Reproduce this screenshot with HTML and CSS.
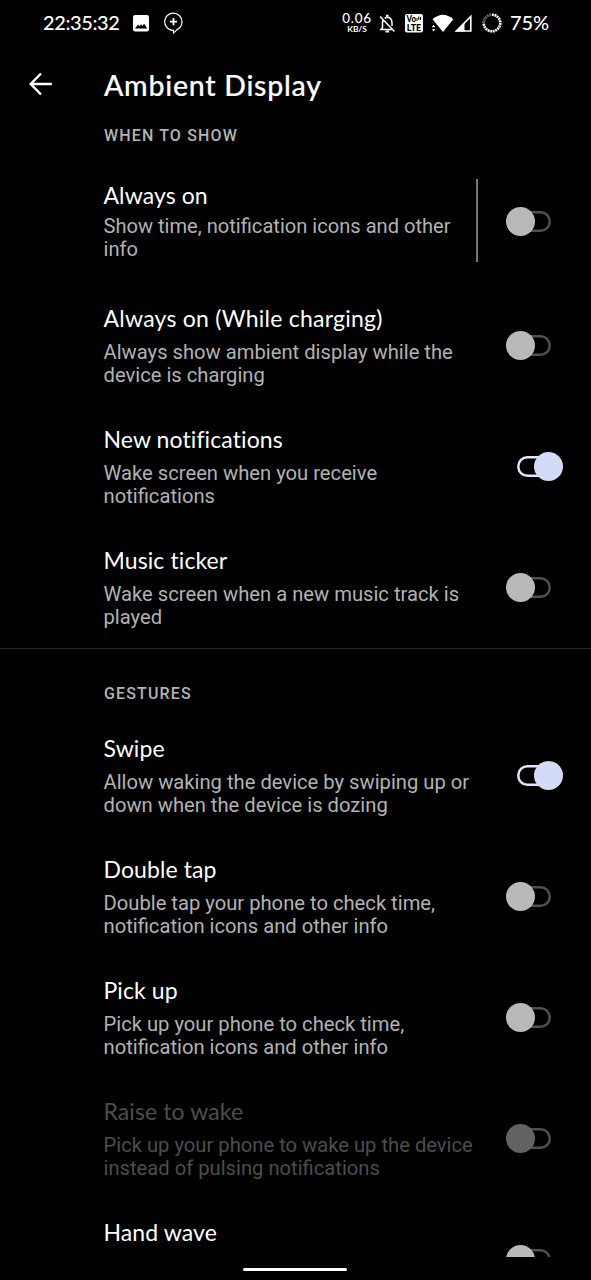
FILE: index.html
```
<!DOCTYPE html>
<html lang="en">
<head>
<meta charset="utf-8">
<title>Ambient Display</title>
<link rel="stylesheet" href="styles.css">
</head>
<body>
<div class="screen">
  <header class="status">
    <span class="clock">22:35:32</span>
    <svg class="ic-photo" width="16" height="17" viewBox="0 0 16 17"><rect width="16" height="16.5" rx="2" fill="#fff"/><path d="M2 13.500 5 9.500l1.500 1.700L8 9.300l1.400 1.700L11 8.800l3.300 4.700z" fill="#000"/></svg>
    <svg class="ic-bubble" width="19" height="22" viewBox="0 0 19 22" fill="none" stroke="#fff"><path d="M9.500 21v-2.600A8.600 8.600 0 1 1 13 17.600Q11.500 19.500 9.500 21z" stroke-width="1.200"/><path d="M9.500 6v7.200M5.900 9.600h7.200" stroke-width="1.800"/></svg>
    <span class="spacer"></span>
    <span class="speed"><b>0.06</b><small>KB/S</small></span>
    <svg class="ic-bell" width="17" height="19" viewBox="0 0 17 19" fill="none" stroke="#fff" stroke-width="1.500"><path d="M1 2.500 15.500 17.500M4.200 6Q3.500 7.200 3.500 9v4.800L2 15.500h11.300M5.700 4.300Q7 3.300 8.300 3.300 13 3.800 13 9v3"/><path d="M7 1.800h2.600M6.500 17.500h3.600" stroke-width="2"/></svg>
    <svg class="ic-volte" width="18" height="19" viewBox="0 0 18 19"><rect width="18" height="18.500" rx="2" fill="#fff"/><text x="1.500" y="8.400" class="volte-text" textLength="9.500" lengthAdjust="spacingAndGlyphs">Vo</text><text x="1.800" y="17" class="volte-text" textLength="14.400" lengthAdjust="spacingAndGlyphs">LTE</text><path d="M12 4v3M13.800 2.500v3.500M15.600 3v3" stroke="#000" stroke-width="1"/></svg>
    <svg class="ic-wifi" width="23" height="19" viewBox="0 0 23 19" fill="#fff"><path d="M1.500 5.300Q12 -4 22.300 5.300L12 18z"/><path d="M0.800 13.200 2.600 10.800l1.800 2.400zM.8 15.200h3.600L2.600 17.600z"/></svg>
    <svg class="ic-signal" width="19" height="19" viewBox="0 0 19 19"><path d="M16.800 2.500V17H2.500z" fill="none" stroke="#fff" stroke-width="1.600"/><path d="M10.500 8V17.500H1z" fill="#fff"/></svg>
    <svg class="ic-battery" width="20" height="20" viewBox="0 0 20 20" fill="none"><circle cx="10" cy="10" r="8.300" stroke="#444" stroke-width="2.600"/><circle cx="10" cy="10" r="8.300" stroke="#fff" stroke-width="2.600" stroke-dasharray="1.700 .907" pathLength="52.140"/><path d="M10 1.700A8.300 8.300 0 0 0 1.700 10" stroke="#000" stroke-opacity=".6" stroke-width="3"/></svg>
    <span class="percent">75%</span>
  </header>

  <div class="appbar">
    <svg class="back" width="24" height="24" viewBox="0 0 24 24" fill="none" stroke="#fff" stroke-width="2.400"><path d="M23.800 12H3M13 1.500 2.700 12 13 22.500"/></svg>
    <h1>Ambient Display</h1>
  </div>

  <main class="list">
    <h2 class="section first">WHEN TO SHOW</h2>
    <div class="row split">
      <div class="texts"><h3>Always on</h3><p>Show time, notification icons and other<br>info</p></div>
      <i class="rule"></i>
      <span class="switch"></span>
    </div>
    <div class="row">
      <div class="texts"><h3 class="wide">Always on (While charging)</h3><p>Always show ambient display while the<br>device is charging</p></div>
      <span class="switch"></span>
    </div>
    <div class="row">
      <div class="texts"><h3>New notifications</h3><p>Wake screen when you receive<br>notifications</p></div>
      <span class="switch on"></span>
    </div>
    <div class="row">
      <div class="texts"><h3>Music ticker</h3><p>Wake screen when a new music track is<br>played</p></div>
      <span class="switch"></span>
    </div>
    <h2 class="section second">GESTURES</h2>
    <div class="row">
      <div class="texts"><h3>Swipe</h3><p>Allow waking the device by swiping up or<br>down when the device is dozing</p></div>
      <span class="switch on"></span>
    </div>
    <div class="row">
      <div class="texts"><h3>Double tap</h3><p>Double tap your phone to check time,<br>notification icons and other info</p></div>
      <span class="switch"></span>
    </div>
    <div class="row">
      <div class="texts"><h3>Pick up</h3><p>Pick up your phone to check time,<br>notification icons and other info</p></div>
      <span class="switch"></span>
    </div>
    <div class="row disabled">
      <div class="texts"><h3>Raise to wake</h3><p>Pick up your phone to wake up the device<br>instead of pulsing notifications</p></div>
      <span class="switch"></span>
    </div>
    <div class="row">
      <div class="texts"><h3>Hand wave</h3></div>
      <span class="switch"></span>
    </div>
  </main>
  <footer class="navbar"><i class="pill"></i></footer>
</div>
</body>
</html>
```
FILE: styles.css
```
*, *::before, *::after { box-sizing: border-box; margin: 0; padding: 0; }
body { background: #000; color: #fff; font-family: Roboto, "Liberation Sans", sans-serif; }
.screen { width: 591px; height: 1280px; display: flex; flex-direction: column; overflow: hidden; background: #000; }

.status { height: 46px; flex: none; display: flex; align-items: center; padding: 0 42px 0 43px; }
.status svg { flex: none; display: block; }
.clock, .percent { font: 500 20px/24px Lato, sans-serif; white-space: nowrap; padding-bottom: 2px; }
.clock { width: 90px; letter-spacing: -.4px; }
.percent { width: 39px; letter-spacing: -.1px; }
.ic-photo { margin-right: 15px; }
.spacer { flex: 1; }
.speed { width: 30px; display: flex; flex-direction: column; align-items: center; gap: 1px; margin-right: 7px; }
.speed b { font: 500 13.500px/11px Lato, sans-serif; letter-spacing: .7px; }
.speed small { font: 700 8.300px/9px Lato, sans-serif; }
.ic-bell { margin-right: 9px; }
.ic-volte { margin-right: 8px; }
.volte-text { font: 900 8.800px Lato, sans-serif; fill: #000; }
.ic-signal { margin-right: 9px; }
.ic-battery { margin-right: 8px; }

.appbar { height: 76px; flex: none; display: flex; align-items: center; padding-left: 28px; }
.back { margin-right: 52px; }
h1 { font: 500 28.500px/34px Lato, sans-serif; letter-spacing: .75px; -webkit-text-stroke: .2px #fff; padding-top: 1px; }

.list { height: 1135px; flex: none; overflow: hidden; }
.section { font-size: 16px; font-weight: 500; line-height: 20px; letter-spacing: 1.150px; color: #b3b3b3; padding-left: 104px; }
.first { height: 35px; padding-top: 4px; }
.second { height: 67px; border-top: 1px solid #272727; padding-top: 35px; }

.row { height: 121px; display: flex; align-items: center; padding-left: 103.500px; }
.texts { width: 402.500px; height: 121px; padding-top: 19px; flex: none; }
h3 { font: 400 23px/28px Lato, sans-serif; letter-spacing: .1px; font-variant-ligatures: none; white-space: nowrap; }
.wide { letter-spacing: .25px; }
p { font-size: 20.200px; line-height: 23px; margin-top: 9px; color: #b2b2b2; white-space: nowrap; }
.split { height: 128px; }
.split .texts { width: 373px; height: 128px; padding-top: 24px; }
.split p { margin-top: 6px; font-size: 20.100px; }
.rule { width: 2px; height: 83px; background: #757575; margin: 0 28.500px 1px -1px; }

.switch { width: 57px; height: 29px; flex: none; display: grid; align-items: center; }
.switch::before, .switch::after { content: ""; grid-area: 1 / 1; }
.switch::before { width: 34px; height: 21px; margin-left: 11px; box-shadow: inset 0 0 0 2.500px #505050; border-radius: 11px; }
.switch::after { width: 29px; height: 29px; border-radius: 50%; background: #b9b9b9; }
.switch.on::before { box-shadow: inset 0 0 0 2.500px #e2e5fa; }
.on::after { justify-self: end; background: #d3dbf8; }
.disabled h3 { color: #4d4d4d; }
.disabled p { color: #4d4d4d; }
.disabled .switch::after { background: #636363; }

.navbar { height: 23px; flex: none; display: flex; justify-content: center; padding: 11px 1px 0 0; }
.pill { width: 104px; height: 3px; border-radius: 2px; background: #fff; }
```
